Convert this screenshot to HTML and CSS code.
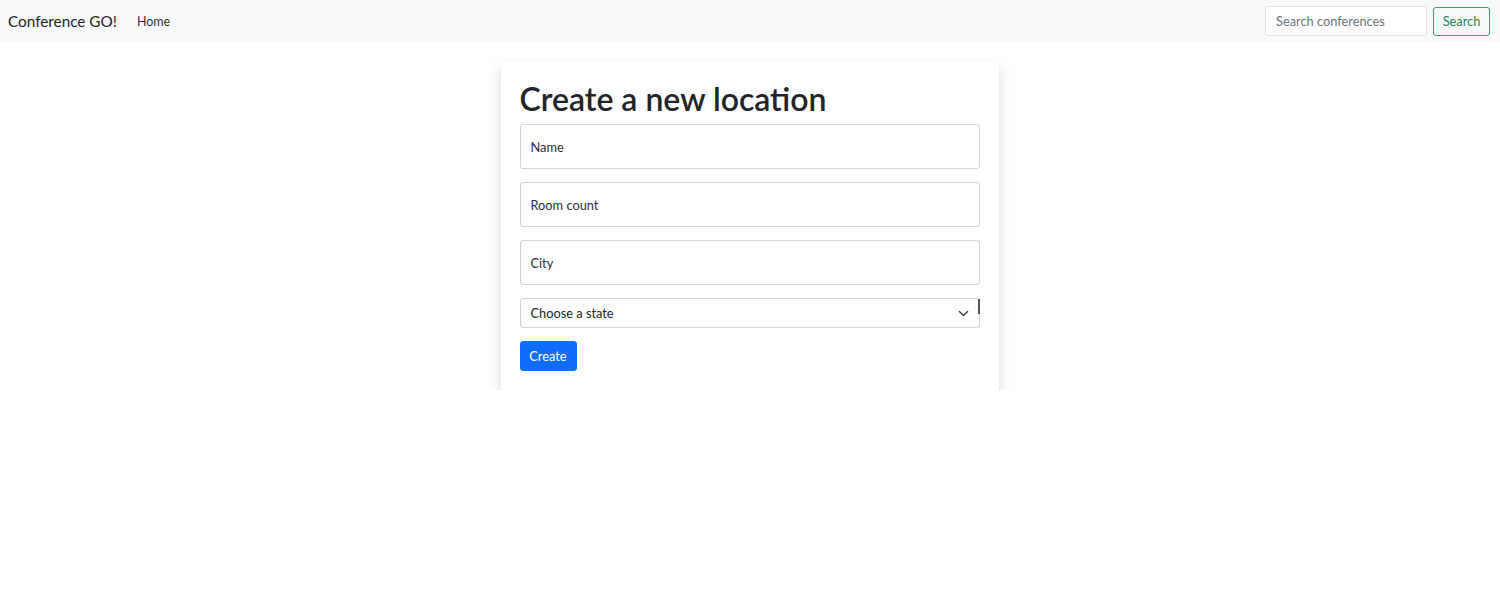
FILE: index.html
```html
<!DOCTYPE html>
<html lang="en">
<head>
<meta charset="utf-8">
<title>Conference GO!</title>
<link rel="stylesheet" href="styles.css">
</head>
<body>
<nav class="navbar">
  <div class="nav-left">
    <a class="brand" href="#">Conference GO!</a>
    <a class="nav-link" href="#">Home</a>
  </div>
  <form class="search">
    <input class="search-input" type="search" placeholder="Search conferences">
    <button class="search-btn" type="button">Search</button>
  </form>
</nav>
<main class="page">
  <div class="card">
    <h1 class="title">Create a new location</h1>
    <form class="form">
      <div class="floating"><span class="floating-label">Name</span></div>
      <div class="floating"><span class="floating-label">Room count</span></div>
      <div class="floating"><span class="floating-label">City</span></div>
      <div class="select-wrap">
        <div class="select">
          <span>Choose a state</span>
          <svg class="chev" viewBox="0 0 16 16" width="11" height="11"><path d="m2 5 6 6 6-6" fill="none" stroke="#343a40" stroke-width="1.8" stroke-linecap="round" stroke-linejoin="round"/></svg>
        </div>
        <span class="caret-mark"></span>
      </div>
      <button class="create-btn" type="button">Create</button>
    </form>
  </div>
</main>
</body>
</html>
```
FILE: styles.css
```css
* { box-sizing: border-box; }
html, body { margin: 0; padding: 0; }
body {
  font-family: Lato, "Noto Sans", "Liberation Sans", sans-serif;
  color: #212529;
  background: #fff;
  font-size: 12.8px;
}
.navbar {
  height: 42px;
  background: #f8f9fa;
  display: flex;
  align-items: center;
  justify-content: space-between;
  padding: 0 10px 0 8px;
}
.nav-left { display: flex; align-items: center; gap: 20px; }
.brand {
  color: #212529;
  text-decoration: none;
  font-size: 15.3px;
}
.nav-link {
  color: rgba(0,0,0,.85);
  text-decoration: none;
  font-size: 12.5px;
}
.search { display: flex; align-items: center; gap: 6px; }
.search-input {
  width: 162px;
  height: 30px;
  border: 1px solid #dee2e6;
  border-radius: 3px;
  padding: 0 10px;
  font: inherit;
  font-size: 12.8px;
  background: #fff;
}
.search-input::placeholder { color: #6c757d; }
.search-btn {
  width: 57px;
  height: 29px;
  border: 1px solid #3d9a6c;
  border-radius: 3px;
  background: transparent;
  color: #198754;
  font: inherit;
  font-size: 12.8px;
  padding: 0;
}
.page { padding: 19px 1px 0 0; }
.card {
  width: 498px;
  margin: 0 auto;
  padding: 19px;
  background: #fff;
  border-radius: 3px;
  box-shadow: 0 6.4px 12.8px rgba(0,0,0,.15);
}
.title {
  margin: 0 0 6px;
  font-size: 32px;
  font-weight: 600;
  line-height: 38px;
}
.form { display: flex; flex-direction: column; gap: 13px; align-items: flex-start; }
.floating {
  width: 100%;
  height: 45px;
  border: 1px solid #ced4da;
  border-radius: 3px;
  display: flex;
  align-items: center;
  padding: 0 10px;
}
.floating-label { font-size: 12.8px; color: #2b3035; }
.select-wrap { position: relative; width: 100%; }
.select {
  height: 30px;
  border: 1px solid #ced4da;
  border-radius: 3px;
  display: flex;
  align-items: center;
  justify-content: space-between;
  padding: 0 10px 0 10px;
  font-size: 12.8px;
}
.chev { display: block; }
.caret-mark {
  position: absolute;
  right: 0;
  top: 1px;
  width: 2px;
  height: 15px;
  background: #555;
}
.create-btn {
  width: 57px;
  height: 30px;
  border: 1px solid #0d6efd;
  background: #0d6efd;
  color: #fff;
  border-radius: 3px;
  font: inherit;
  font-size: 12.8px;
  padding: 0;
}
```
